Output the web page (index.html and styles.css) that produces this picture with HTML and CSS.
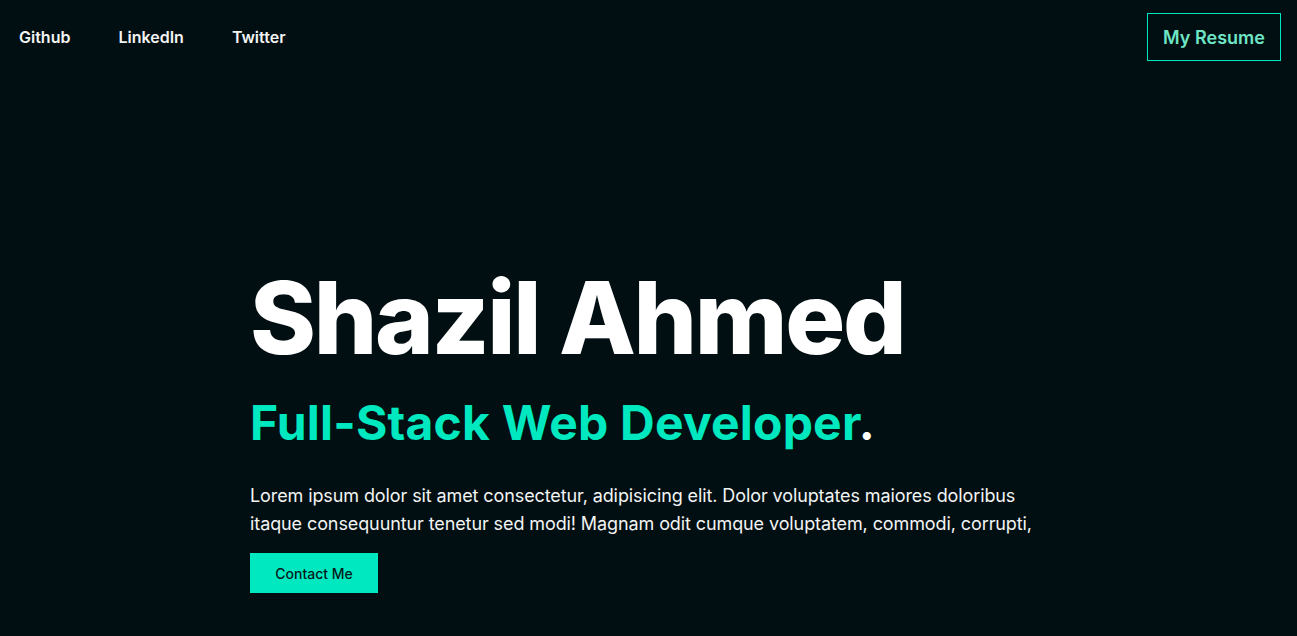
FILE: index.html
```html
<!DOCTYPE html>
<html lang="en">
<head>
<meta charset="utf-8">
<title>Shazil Ahmed</title>
<link rel="stylesheet" href="styles.css">
</head>
<body>
<header class="nav">
  <nav class="nav-links">
    <a href="#" class="nav-link">Github</a>
    <a href="#" class="nav-link">LinkedIn</a>
    <a href="#" class="nav-link">Twitter</a>
  </nav>
  <a href="#" class="resume-btn">My Resume</a>
</header>
<main class="hero">
  <h1 class="hero-name">Shazil Ahmed</h1>
  <h2 class="hero-role">Full-Stack Web Developer<span class="dot">.</span></h2>
  <p class="hero-text">Lorem ipsum dolor sit amet consectetur, adipisicing elit. Dolor voluptates maiores doloribus itaque consequuntur tenetur sed modi! Magnam odit cumque voluptatem, commodi, corrupti,</p>
  <a href="#" class="contact-btn">Contact Me</a>
</main>
</body>
</html>
```
FILE: styles.css
```css
* { box-sizing: border-box; }
html, body { margin: 0; padding: 0; }
body {
  background: #020f12;
  color: #f2f4f4;
  font-family: Inter, "Noto Sans", sans-serif;
  height: 636px;
  overflow: hidden;
}
a { text-decoration: none; }
.nav {
  display: flex;
  align-items: center;
  justify-content: space-between;
  padding: 13px 16px 0 19px;
}
.nav-links {
  display: flex;
  gap: 48px;
}
.nav-link {
  color: #f2f4f4;
  font-size: 16px;
  font-weight: 600;
}
.resume-btn {
  display: flex;
  align-items: center;
  justify-content: center;
  width: 134px;
  height: 48px;
  border: 1px solid #00e8bf;
  color: #6ee6c6;
  font-size: 18px;
  font-weight: 600;
}
.hero {
  padding: 207px 0 0 250px;
}
.hero-name {
  margin: 0;
  font-size: 100px;
  line-height: 1;
  font-weight: 800;
  color: #ffffff;
  letter-spacing: -2.3px;
}
.hero-role {
  margin: 31px 0 0;
  font-size: 48px;
  line-height: 1;
  font-weight: 700;
  color: #00e8bf;
  letter-spacing: 0.2px;
}
.dot { color: #ffffff; }
.hero-text {
  margin: 35px 0 0;
  max-width: 800px;
  font-size: 18px;
  line-height: 28px;
  letter-spacing: -0.1px;
  color: #f2f4f4;
}
.contact-btn {
  display: inline-flex;
  align-items: center;
  justify-content: center;
  margin-top: 15px;
  width: 128px;
  height: 40px;
  background: #00e8bf;
  color: #051a1a;
  font-size: 14px;
  font-weight: 500;
}
```
